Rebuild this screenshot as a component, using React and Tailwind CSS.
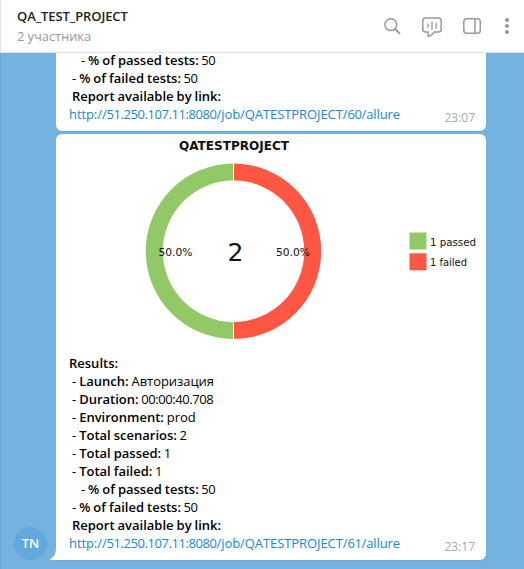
const RESULTS = [
  ['', 'Results:', ''],
  [' - ', 'Launch:', ' Авторизация'],
  [' - ', 'Duration:', ' 00:00:40.708'],
  [' - ', 'Environment:', ' prod'],
  [' - ', 'Total scenarios:', ' 2'],
  [' - ', 'Total passed:', ' 1'],
  [' - ', 'Total failed:', ' 1'],
];

const SUMMARY = [
  ['    - ', '% of passed tests:', ' 50'],
  [' - ', '% of failed tests:', ' 50'],
  [' ', 'Report available by link:', ''],
];

// Tightens runs of digits so that they sit on a 7px advance.
function Digits({ children }) {
  return <span className="tracking-[-0.43px]">{children}</span>;
}

function Report({ lines, build, time }) {
  return (
    <div className="flex items-end justify-between pr-[11px] pb-2 pl-[13px]">
      <div className="text-[13px] leading-[18px] [word-spacing:-0.4px] whitespace-pre text-black">
        {lines.map(([lead, label, value]) => (
          <div key={label}>
            {lead}
            <span className="font-semibold">{label}</span>
            {/\d/.test(value) ? <Digits>{value}</Digits> : <span className="tracking-[-0.05px]">{value}</span>}
          </div>
        ))}
        <a className="block tracking-[-0.08px] text-[#168acd]">
          http://<Digits>51.250.107.11:8080</Digits>/job/QATESTPROJECT/<Digits>{build}</Digits>/allure
        </a>
      </div>
      <span className="-mb-[4px] text-[12px] leading-[18px] text-[#a0acb6]">{time}</span>
    </div>
  );
}

function Chart() {
  return (
    <svg
      className="block h-[220px] w-[430px]"
      viewBox="56 134 430 220"
      fontFamily="'DejaVu Sans', sans-serif"
      fill="#111"
    >
      <text x="179" y="149.5" fontSize="11.6" fontWeight="700" textLength="110" lengthAdjust="spacingAndGlyphs">
        QATESTPROJECT
      </text>
      <path d="M233.5 163.5a87.5 87.5 0 0 0 0 175.5v-17a70.75 70.75 0 0 1 0-141.5z" fill="#92c966" />
      <path d="M233.5 163.5a87.5 87.5 0 0 1 0 175.5v-17a70.75 70.75 0 0 0 0-141.5z" fill="#ff5744" />
      <path d="M233.5 163.500v17M233.5 322v17" stroke="#fff" strokeWidth="1" />
      <text x="158.5" y="255.500" fontSize="10.5" textLength="34" lengthAdjust="spacingAndGlyphs">50.0%</text>
      <text x="276" y="255.5" fontSize="10.5" textLength="34" lengthAdjust="spacingAndGlyphs">50.0%</text>
      <text x="227.5" y="261" fontSize="25">2</text>
      <rect x="409.5" y="232.5" width="17" height="17" fill="#92c966" />
      <rect x="409.5" y="253.3" width="17" height="17" fill="#ff5744" />
      <text x="430" y="246" fontSize="10" textLength="46" lengthAdjust="spacingAndGlyphs">1 passed</text>
      <text x="430" y="265.5" fontSize="10" textLength="37" lengthAdjust="spacingAndGlyphs">1 failed</text>
    </svg>
  );
}

function HeaderIcons() {
  return (
    <svg className="h-[53px] w-[148px]" viewBox="376 0 148 53" fill="none" stroke="#999" strokeWidth="1.5">
      <circle cx="390.8" cy="24.7" r="5.9" />
      <path d="M395 29l5 4.800" strokeWidth="1.8" />
      <path d="M425.500 18h13a2.700 2.700 0 0 1 2.700 2.700v8.600a2.700 2.700 0 0 1-2.700 2.700h-4.200c-1.300 1.800-3.200 3.500-5.200 4.300-.6.200-1-.1-1-.6V32h-2.600a2.700 2.700 0 0 1-2.700-2.700v-8.600a2.700 2.700 0 0 1 2.700-2.700z" />
      <path d="M428 23.200v4.600M432 21.300v8.400M436 22.700v6.100" strokeWidth="1.300" />
      <rect x="463.8" y="18.8" width="16.500" height="14.500" rx="3" />
      <path d="M475 19v14" />
      <g fill="#999" stroke="none">
        <circle cx="507" cy="20" r="2.1" />
        <circle cx="507" cy="26" r="2.1" />
        <circle cx="507" cy="32" r="2.1" />
      </g>
    </svg>
  );
}

export default function App() {
  return (
    <div className="flex h-[569px] w-[524px] flex-col overflow-hidden bg-[#74b2e0] font-['Open_Sans','Noto_Sans',sans-serif]">
      <header className="flex h-[53px] shrink-0 justify-between border-b border-l border-[#dfe3e6] bg-white">
        <div className="pt-[7px] pl-4">
          <h1 className="text-[13px] leading-[18px] font-semibold tracking-[-0.1px] text-[#222]">QA_TEST_PROJECT</h1>
          <p className="mt-[2px] text-[13px] leading-[18px] tracking-[-0.1px] text-[#999]">2 участника</p>
        </div>
        <HeaderIcons />
      </header>
      <main className="flex min-h-0 flex-1 flex-col justify-end overflow-hidden border-l border-[#6ba5d1] pb-[9px]">
        <section className="ml-[55px] w-[430px] shrink-0 rounded-b-[6px] bg-white shadow-[0_1px_0_#68a6d7]">
          <Report lines={SUMMARY} build="60" time="23:07" />
        </section>
        <div className="mt-[3px] flex shrink-0 items-end">
          <div className="ml-[13px] flex size-[33px] items-center justify-center rounded-full bg-[#62a8dc] text-[13px] font-semibold text-white">
            TN
          </div>
          <svg className="ml-[3px] h-[12px] w-[6px]" viewBox="0 0 6 12">
            <path d="M6 0v12H.5c-.6 0-.7-.6-.2-.9C4 9 6 5 6 0z" fill="#fff" />
          </svg>
          <section className="w-[430px] overflow-hidden rounded-[6px] rounded-bl-none bg-white shadow-[0_1px_0_#68a6d7]">
            <Chart />
            <Report lines={[...RESULTS, ...SUMMARY]} build="61" time="23:17" />
          </section>
        </div>
      </main>
    </div>
  );
}
